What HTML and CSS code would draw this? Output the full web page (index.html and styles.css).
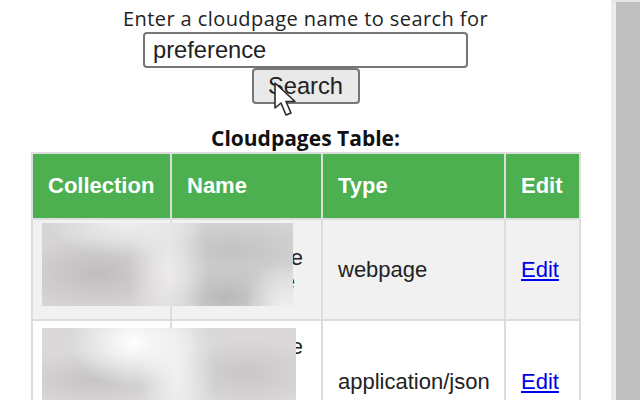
FILE: index.html
```html
<!DOCTYPE html>
<html lang="en">
<head>
    <meta charset="UTF-8">
    <title>Cloudpages</title>
    <link rel="stylesheet" href="styles.css">
</head>
<body>
    <div class="page">
        <main class="content">
            <form class="search-form">
                <label for="search" class="search-label">Enter a cloudpage name to search for</label>
                <input type="text" id="search" class="search-input" value="preference">
                <button type="button" class="search-btn">Search</button>
                <svg class="cursor" width="28" height="36" viewBox="0 0 28 36">
                    <path d="M2 1 L2 26 L8 21 L13 33 L18 31 L13 19.500 L22 19.500 Z" fill="#fff" stroke="#2a2a2a" stroke-width="1.600" stroke-linejoin="round"/>
                </svg>
            </form>

            <h3 class="table-title">Cloudpages Table:</h3>

            <div class="table-wrap">
                <table class="pages-table">
                    <thead>
                        <tr>
                            <th class="col-collection">Collection</th>
                            <th class="col-name">Name</th>
                            <th class="col-type">Type</th>
                            <th class="col-edit">Edit</th>
                        </tr>
                    </thead>
                    <tbody>
                        <tr class="row-first">
                            <td></td>
                            <td class="name-cell">e<br><a href="#" class="name-link">e</a></td>
                            <td>webpage</td>
                            <td><a href="#">Edit</a></td>
                        </tr>
                        <tr class="row-second">
                            <td></td>
                            <td class="name-cell name-top">e</td>
                            <td>application/json</td>
                            <td><a href="#">Edit</a></td>
                        </tr>
                    </tbody>
                </table>
                <div class="redact redact-first"></div>
                <div class="redact redact-second"></div>
            </div>
        </main>
        <div class="scrollbar"></div>
    </div>
</body>
</html>
```

FILE: styles.css
```css
html, body {
    margin: 0;
    height: 400px;
    overflow: hidden;
    background: #fff;
}
.page {
    display: flex;
    height: 400px;
    overflow: hidden;
}
.content {
    width: 611px;
    flex-shrink: 0;
}
.scrollbar {
    flex: 1;
    background: #bfbfbf;
    border-left: 5px solid #ececec;
    border-top: 2px solid #e4e4e4;
}

.search-form {
    position: relative;
    display: flex;
    flex-direction: column;
    align-items: center;
    padding-top: 6px;
    font-family: "Open Sans", "Noto Sans", sans-serif;
    color: #222;
}
.search-label {
    font-size: 20px;
    letter-spacing: 0.420px;
    line-height: 26px;
}
.search-input {
    box-sizing: border-box;
    width: 325px;
    height: 36px;
    padding: 0 8px;
    border: 2px solid #767676;
    border-radius: 4px;
    font: 23.700px "Liberation Sans", Arial, sans-serif;
    color: #222;
}
.search-btn {
    box-sizing: border-box;
    width: 108px;
    height: 36px;
    padding: 0;
    border: 2px solid #767676;
    border-radius: 4px;
    background: #e9e9e9;
    font: 23.700px "Liberation Sans", Arial, sans-serif;
    color: #222;
}
.cursor {
    position: absolute;
    left: 273px;
    top: 82px;
}

.table-title {
    margin: 20px 0 0;
    height: 28px;
    text-align: center;
    font: bold 21px/28px "Open Sans", "Noto Sans", sans-serif;
    color: #111;
}

.table-wrap {
    position: relative;
    margin: 0 31px;
}
.pages-table {
    width: 548px;
    table-layout: fixed;
    border-collapse: collapse;
    font-family: "Liberation Sans", Arial, sans-serif;
    font-size: 22px;
    color: #222;
}
.pages-table th,
.pages-table td {
    box-sizing: border-box;
    border: 2px solid #ddd;
    padding: 0 15px;
    text-align: left;
    vertical-align: middle;
}
.pages-table th {
    height: 66px;
    background: #4caf50;
    color: #fff;
}
.col-collection { width: 139px; }
.col-name { width: 151px; }
.col-type { width: 183px; }
.col-edit { width: 75px; }

.row-first { background: #f1f1f1; }
.row-first td { height: 101px; }
.row-second td { height: 124px; }

.name-cell {
    text-align: right !important;
    padding-right: 18px !important;
    line-height: 24px;
}
.name-link { margin-right: 8px; text-decoration: none; }
.name-top { vertical-align: top !important; padding-top: 14px !important; }

a { color: #0000ee; }

.redact {
    position: absolute;
    left: 11px;
    overflow: hidden;
}
.redact-first {
    top: 71px;
    width: 251px;
    height: 83px;
    background-color: #d6d4d4;
    background-image:
        radial-gradient(ellipse 80px 34px at 85px 0px, #f0efef, transparent),
        radial-gradient(ellipse 40px 80px at 126px 45px, #edebeb, transparent),
        radial-gradient(ellipse 40px 45px at 243px 83px, #f0f0f0, transparent),
        radial-gradient(ellipse 80px 38px at 55px 50px, #bfbdbd, transparent),
        radial-gradient(ellipse 60px 34px at 183px 74px, #b9b8b8, transparent),
        radial-gradient(ellipse 90px 36px at 190px 28px, #c3c2c2, transparent);
}
.redact-second {
    top: 176px;
    width: 254px;
    height: 90px;
    background-color: #dad8d8;
    background-image:
        radial-gradient(ellipse 65px 45px at 92px 14px, #ffffff, transparent),
        radial-gradient(ellipse 38px 90px at 135px 50px, #f2f1f1, transparent),
        radial-gradient(ellipse 85px 28px at 50px 52px, #c6c4c4, transparent),
        radial-gradient(ellipse 75px 34px at 205px 45px, #c8c6c6, transparent);
}
```
